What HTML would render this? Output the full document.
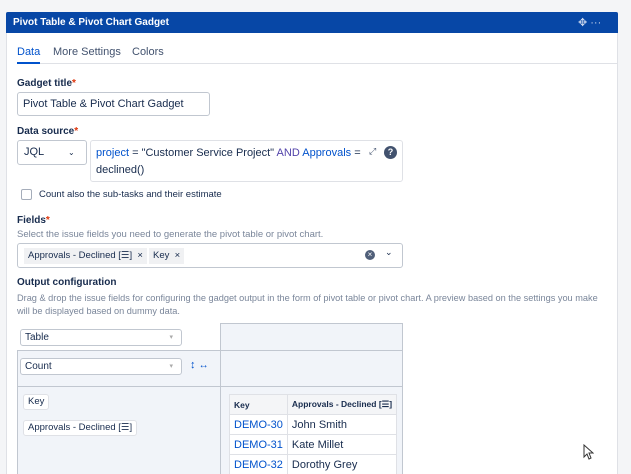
<!DOCTYPE html>
<html><head><style>
*{box-sizing:border-box;margin:0;padding:0}
html,body{width:631px;height:474px;overflow:hidden}
body{background:#f4f5f7;font-family:"Liberation Sans",sans-serif;color:#172b4d;position:relative}
.a{position:absolute}
.panel{left:6px;top:12px;width:612px;height:470px;background:#fff;border:1px solid #dfe1e6}
.hdr{left:6px;top:12px;width:612px;height:21px;background:#0747a6;color:#fff;font-weight:bold;font-size:10px;line-height:21px;padding-left:7px;border-radius:2px 2px 0 0}
.lbl{font-size:10px;font-weight:bold;color:#172b4d}
.lbl i{color:#de350b;font-style:normal}
.inp{border:1px solid #c1c7d0;border-radius:3px;background:#fff;font-size:11px}
.help{font-size:9.5px;color:#7a869a}
.chip{background:#f0f1f3;font-size:9.5px;padding:0 4px;line-height:16px;height:16px;white-space:nowrap}
.sel{border:1px solid #c1c7d0;border-radius:3px;background:#fff;font-size:10px;line-height:15px;padding-left:4px}
.sel:after{content:"▾";position:absolute;right:8px;top:0;font-size:7px;color:#aaa}
td{border:1px solid #dfe1e6;font-size:11px;height:20px;padding:0 4px;background:#fff;white-space:nowrap}
</style></head><body>
<div class="a panel"></div>
<div class="a hdr">Pivot Table &amp; Pivot Chart Gadget</div>
<div class="a" style="left:578px;top:16px;color:#c7d4ec;font-size:11px">✥ ···</div>
<div class="a" style="left:17px;top:46px;font-size:11px;color:#0052cc">Data</div>
<div class="a" style="left:53px;top:46px;font-size:11px;color:#42526e">More Settings</div>
<div class="a" style="left:132px;top:46px;font-size:11px;color:#42526e">Colors</div>
<div class="a" style="left:17px;top:63px;width:601px;height:1px;background:#dfe1e6"></div>
<div class="a" style="left:17px;top:62px;width:23px;height:2px;background:#0052cc"></div>
<div class="a lbl" style="left:17px;top:78px">Gadget title<i>*</i></div>
<div class="a inp" style="left:17px;top:92px;width:193px;height:24px;line-height:22px;padding-left:5px">Pivot Table &amp; Pivot Chart Gadget</div>
<div class="a lbl" style="left:17px;top:126px">Data source<i>*</i></div>
<div class="a inp" style="left:17px;top:140px;width:70px;height:25px;line-height:23px;padding-left:6px">JQL<span style="position:absolute;left:50px;font-size:8px">⌄</span></div>
<div class="a inp" style="left:90px;top:140px;width:313px;height:42px;padding:4px 0 0 5px;line-height:17px;border-color:#dfe1e6"><span style="color:#0052cc">project</span> = "Customer Service Project" <span style="color:#5243aa">AND</span> <span style="color:#0052cc">Approvals</span> =<br>declined()</div>
<div class="a" style="left:369px;top:146px;font-size:9px;color:#42526e">⤢</div>
<div class="a" style="left:384px;top:146px;width:13px;height:13px;border-radius:50%;background:#42526e;color:#fff;font-size:9px;font-weight:bold;text-align:center;line-height:13px">?</div>
<div class="a" style="left:21px;top:189px;width:11px;height:11px;border:1px solid #a5adba;border-radius:2px"></div>
<div class="a" style="left:39px;top:189px;font-size:9.5px">Count also the sub-tasks and their estimate</div>
<div class="a lbl" style="left:17px;top:215px">Fields<i>*</i></div>
<div class="a help" style="left:17px;top:229px">Select the issue fields you need to generate the pivot table or pivot chart.</div>
<div class="a inp" style="left:17px;top:243px;width:386px;height:25px"></div>
<div class="a chip" style="left:24px;top:248px">Approvals - Declined [☰] &nbsp;×</div>
<div class="a chip" style="left:149px;top:248px">Key &nbsp;×</div>
<div class="a" style="left:365px;top:250px;width:10px;height:10px;border-radius:50%;background:#505f79;color:#fff;font-size:8px;text-align:center;line-height:10px">×</div>
<div class="a" style="left:385px;top:247px;font-size:9px">⌄</div>
<div class="a lbl" style="left:17px;top:277px">Output configuration</div>
<div class="a help" style="left:17px;top:292px;line-height:13px;width:590px;font-size:9.2px">Drag &amp; drop the issue fields for configuring the gadget output in the form of pivot table or pivot chart. A preview based on the settings you make will be displayed based on dummy data.</div>
<div class="a" style="left:220px;top:323px;width:183px;height:160px;background:#f1f4f9;border:1px solid #c1c7d0"></div>
<div class="a" style="left:220px;top:350px;width:183px;height:1px;background:#c1c7d0"></div>
<div class="a" style="left:17px;top:350px;width:204px;height:130px;background:#f1f4f9;border:1px solid #c1c7d0"></div>
<div class="a" style="left:17px;top:386px;width:386px;height:1px;background:#c1c7d0"></div>
<div class="a sel" style="left:20px;top:329px;width:162px;height:17px">Table</div>
<div class="a sel" style="left:20px;top:358px;width:162px;height:17px">Count</div>
<div class="a" style="left:190px;top:359px;font-size:11px;color:#0052cc">↕ <span style="font-size:10px">↔</span></div>
<div class="a chip" style="left:23px;top:394px;background:#fff;border:1px solid #dfe1e6;border-radius:3px;line-height:14px">Key</div>
<div class="a chip" style="left:23px;top:420px;background:#fff;border:1px solid #dfe1e6;border-radius:3px;line-height:14px">Approvals - Declined [☰]</div>
<table class="a" style="left:229px;top:394px;border-collapse:collapse;width:166px">
<tr><td style="background:#f4f5f7;font-size:8.5px;font-weight:bold;height:19px;width:56px">Key</td><td style="background:#f4f5f7;font-size:8.5px;font-weight:bold">Approvals - Declined [☰]</td></tr>
<tr><td style="color:#0052cc">DEMO-30</td><td>John Smith</td></tr>
<tr><td style="color:#0052cc">DEMO-31</td><td>Kate Millet</td></tr>
<tr><td style="color:#0052cc">DEMO-32</td><td>Dorothy Grey</td></tr>
</table>
<svg class="a" style="left:583px;top:444px" width="11" height="16" viewBox="0 0 11 16"><path d="M1 1L1 13L4 10L6 15L8 14L6 9L10 9Z" fill="#fff" stroke="#333" stroke-width="1"/></svg>
</body></html>
